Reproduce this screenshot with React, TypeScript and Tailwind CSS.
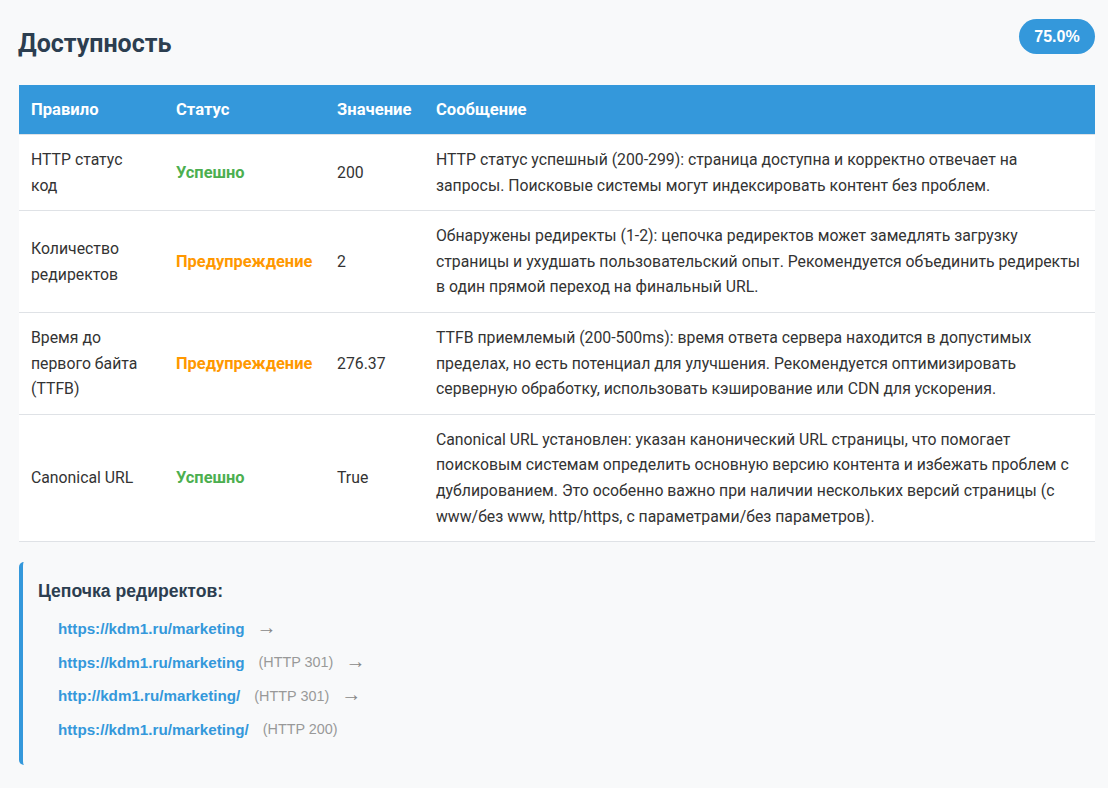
const rows = [
  {
    rule: "HTTP статус код",
    status: "Успешно",
    ok: true,
    value: "200",
    message:
      "HTTP статус успешный (200-299): страница доступна и корректно отвечает на запросы. Поисковые системы могут индексировать контент без проблем.",
  },
  {
    rule: "Количество редиректов",
    status: "Предупреждение",
    ok: false,
    value: "2",
    message:
      "Обнаружены редиректы (1-2): цепочка редиректов может замедлять загрузку страницы и ухудшать пользовательский опыт. Рекомендуется объединить редиректы в один прямой переход на финальный URL.",
  },
  {
    rule: "Время до первого байта (TTFB)",
    status: "Предупреждение",
    ok: false,
    value: "276.37",
    message:
      "TTFB приемлемый (200-500ms): время ответа сервера находится в допустимых пределах, но есть потенциал для улучшения. Рекомендуется оптимизировать серверную обработку, использовать кэширование или CDN для ускорения.",
  },
  {
    rule: "Canonical URL",
    status: "Успешно",
    ok: true,
    value: "True",
    message:
      "Canonical URL установлен: указан канонический URL страницы, что помогает поисковым системам определить основную версию контента и избежать проблем с дублированием. Это особенно важно при наличии нескольких версий страницы (с www/без www, http/https, с параметрами/без параметров).",
  },
];

const redirects = [
  { url: "https://kdm1.ru/marketing", code: "", arrow: true },
  { url: "https://kdm1.ru/marketing", code: "(HTTP 301)", arrow: true },
  { url: "http://kdm1.ru/marketing/", code: "(HTTP 301)", arrow: true },
  { url: "https://kdm1.ru/marketing/", code: "(HTTP 200)", arrow: false },
];

export default function App() {
  return (
    <div className="min-h-[788px] bg-[#f8f9fa] pl-[19px] pr-[13px] pt-[19px] pb-[23px] font-['Roboto',sans-serif] text-[#333333]">
      <div className="flex items-start justify-between h-[66px]">
        <h2 className="text-[25px] -ml-[1px] font-bold leading-[50px] text-[#2c3e50]">Доступность</h2>
        <span className="h-[35px] w-[76px] rounded-full bg-[#3498db] text-white text-center font-['Liberation_Sans',sans-serif] font-bold text-[16px] leading-[35px]">
          75.0%
        </span>
      </div>

      <table className="w-[1076px] table-fixed border-collapse bg-white text-[15.8px] leading-[25.6px]">
        <thead>
          <tr className="bg-[#3498db] text-white border-b border-[#dfe2e6] text-[16.6px] leading-[25px]">
            <th className="w-[145px] p-3 text-left font-bold">Правило</th>
            <th className="w-[161px] p-3 text-left font-bold">Статус</th>
            <th className="w-[99px] p-3 text-left font-bold">Значение</th>
            <th className="p-3 text-left font-bold">Сообщение</th>
          </tr>
        </thead>
        <tbody>
          {rows.map((row) => (
            <tr key={row.rule} className="border-b border-[#dfe2e6]">
              <td className="p-3">{row.rule}</td>
              <td className={`p-3 text-[16.4px] font-bold ${row.ok ? "text-[#4caf50]" : "text-[#ff9800]"}`}>
                {row.status}
              </td>
              <td className="p-3">{row.value}</td>
              <td className="p-3">{row.message}</td>
            </tr>
          ))}
        </tbody>
      </table>

      <div className="mt-5 h-[203px] w-[1076px] rounded-[5px] border-l-4 border-[#3498db] pl-[15px] pt-[15px] font-['Liberation_Sans',sans-serif]">
        <h4 className="text-[17.6px] font-bold leading-[28px] text-[#2c3e50]">Цепочка редиректов:</h4>
        <div className="mt-[8px] ml-5 flex flex-col">
          {redirects.map((item, i) => (
            <div key={i} className="flex h-[33.4px] items-center text-[15.2px]">
              <span className="font-bold text-[#3498db]">{item.url}</span>
              {item.code && <span className="ml-[14px] text-[14.4px] text-[#999999]">{item.code}</span>}
              {item.arrow && <span className="ml-[12px] mb-[5px] text-[20px] leading-[24px] text-[#888888]">→</span>}
            </div>
          ))}
        </div>
      </div>
    </div>
  );
}
